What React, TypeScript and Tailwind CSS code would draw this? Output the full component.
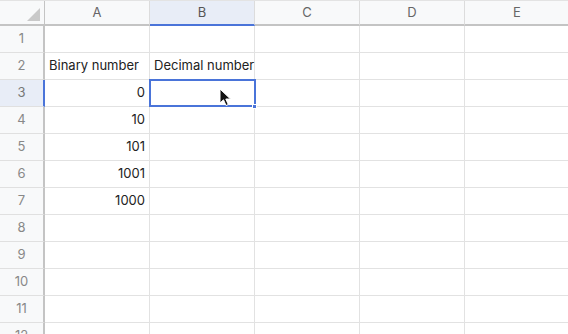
const cols = ['A', 'B', 'C', 'D', 'E'];

const rows: { n: number; a?: string; b?: string; aRight?: boolean }[] = [
  { n: 1 },
  { n: 2, a: 'Binary number', b: 'Decimal number' },
  { n: 3, a: '0', aRight: true },
  { n: 4, a: '10', aRight: true },
  { n: 5, a: '101', aRight: true },
  { n: 6, a: '1001', aRight: true },
  { n: 7, a: '1000', aRight: true },
  { n: 8 },
  { n: 9 },
  { n: 10 },
  { n: 11 },
  { n: 12 },
];

function Cursor() {
  return (
    <svg width="14" height="20" viewBox="0 0 14 20" className="absolute left-[219px] top-[88px]">
      <path
        d="M1 1 L1 15 L4.5 11.8 L7 17.5 L9.3 16.5 L6.8 11 L11.5 11 Z"
        fill="#111"
        stroke="#fff"
        strokeWidth="1"
        strokeLinejoin="round"
      />
    </svg>
  );
}

export default function App() {
  return (
    <div
      className="relative w-[568px] h-[334px] overflow-hidden bg-white text-[13px] text-[#222]"
      style={{ fontFamily: 'Inter, "Open Sans", sans-serif' }}
    >
      {/* Column headers */}
      <div className="flex h-[26px] bg-[#f8f9fa] border-t border-[#e3e3e3]">
        <div className="relative w-[45px] shrink-0 border-r border-b-2 border-r-[#c4c4c4] border-b-[#c4c4c4]">
          <div className="absolute right-[4px] bottom-[3px] w-0 h-0 [border-bottom:13px_solid_#c9c9c9] [border-left:13px_solid_transparent]" />
        </div>
        {cols.map((c) => (
          <div
            key={c}
            className={
              c === 'B'
                ? 'w-[105px] shrink-0 flex items-center justify-center bg-[#e8edf7] text-[#555] border-r border-[#dcdcdc] border-b-2 border-b-[#4a74d9]'
                : 'w-[105px] shrink-0 flex items-center justify-center text-[#666] border-r border-[#dcdcdc] border-b-2 border-b-[#c4c4c4]'
            }
          >
            {c}
          </div>
        ))}
      </div>

      {/* Rows */}
      {rows.map((r) => (
        <div key={r.n} className="flex h-[27px]">
          <div
            className={
              r.n === 3
                ? 'w-[45px] shrink-0 flex items-center justify-center bg-[#e8edf7] text-[#777] border-b border-[#e0e0e0] border-r-2 border-r-[#4a74d9]'
                : 'w-[45px] shrink-0 flex items-center justify-center bg-[#f8f9fa] text-[#888] border-b border-[#e0e0e0] border-r-2 border-r-[#c4c4c4]'
            }
          >
            {r.n}
          </div>
          <div
            className={
              'w-[105px] shrink-0 flex items-center px-[4px] whitespace-nowrap border-r border-b border-[#e2e2e2] ' +
              (r.aRight ? 'justify-end' : 'justify-start')
            }
          >
            {r.a}
          </div>
          <div
            className={
              r.n === 3
                ? 'relative w-[105px] shrink-0 flex items-center px-[4px] border-r border-b border-[#e2e2e2]'
                : 'w-[105px] shrink-0 flex items-center px-[4px] whitespace-nowrap border-r border-b border-[#e2e2e2]'
            }
          >
            {r.b}
            {r.n === 3 && (
              <>
                <div className="absolute -left-[1px] -top-[1px] w-[107px] h-[28px] border-2 border-[#4a74d9]" />
                <div className="absolute -right-[3px] -bottom-[3px] w-[5px] h-[5px] bg-[#4a74d9] border border-white" />
              </>
            )}
          </div>
          {['C', 'D', 'E'].map((c) => (
            <div key={c} className="w-[105px] shrink-0 border-r border-b border-[#e2e2e2]" />
          ))}
        </div>
      ))}

      <Cursor />
    </div>
  );
}
